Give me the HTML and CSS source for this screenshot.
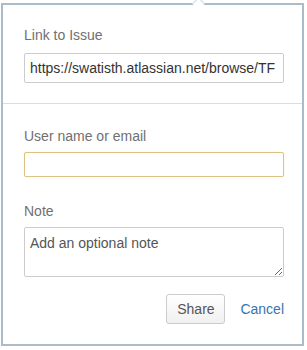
FILE: index.html
```html
<!DOCTYPE html>
<html lang="en">
<head>
    <meta charset="UTF-8">
    <meta name="viewport" content="width=device-width, initial-scale=1.0">
    <title>Share Issue</title>
    <link rel="stylesheet" href="styles.css">
</head>
<body>
    <div class="dialog">
        <span class="tip"></span>
        <div class="section top">
            <label for="link">Link to Issue</label>
            <input type="text" id="link" class="field" value="https://swatisth.atlassian.net/browse/TF" readonly>
        </div>
        <div class="section share">
            <label for="user">User name or email</label>
            <input type="text" id="user" class="field user">

            <label for="note" class="note-label">Note</label>
            <textarea id="note" class="field note" placeholder="Add an optional note"></textarea>

            <div class="actions">
                <button type="button" class="btn">Share</button>
                <a href="#" class="cancel">Cancel</a>
            </div>
        </div>
    </div>
</body>
</html>
```

FILE: styles.css
```css
body {
    margin: 0;
    background-color: #fff;
    font-family: "Liberation Sans", Arial, sans-serif;
    font-size: 14px;
    color: #333;
}
.dialog {
    position: relative;
    box-sizing: border-box;
    width: 303px;
    height: 343px;
    margin: 3px 0 0 1px;
    border: 2px solid #abbbc7;
    background-color: #fff;
}
/* little arrow on top edge */
.tip {
    position: absolute;
    top: -6px;
    left: 191px;
    width: 8px;
    height: 8px;
    background-color: #fff;
    border-top: 1px solid #cfd9e0;
    border-left: 1px solid #cfd9e0;
    transform: rotate(45deg);
}
.section {
    display: flex;
    flex-direction: column;
    padding: 20px 18px 20px 21px;
}
.top {
    border-bottom: 1px solid #dcdcdc;
}
.share {
    padding-top: 22px;
}
label {
    line-height: 20px;
    color: #707070;
    margin-bottom: 8px;
}
.share label {
    margin-bottom: 6px;
}
.share .note-label {
    margin-top: 24px;
}
.field {
    box-sizing: border-box;
    width: 100%;
    height: 30px;
    margin: 0;
    padding: 0 5px;
    border: 1px solid #cccccc;
    border-radius: 2px;
    font-family: inherit;
    font-size: 14px;
    color: #333;
    background-color: #fff;
    outline: none;
}
.user {
    height: 25px;
    border-color: #dcc385;
    box-shadow: 0 0 1px #efdca6;
}
.note {
    height: 50px;
    padding: 7px 5px;
    line-height: 16px;
    resize: vertical;
}
.note::placeholder {
    color: #555;
}
.actions {
    display: flex;
    justify-content: flex-end;
    align-items: center;
    gap: 15px;
    margin-top: 17px;
}
.btn {
    box-sizing: border-box;
    width: 59px;
    height: 30px;
    padding: 0;
    border: 1px solid #cccccc;
    border-radius: 3px;
    background: linear-gradient(#ffffff, #f0f0f0);
    font-family: inherit;
    font-size: 14px;
    color: #555;
    cursor: pointer;
}
.cancel {
    color: #3b73af;
    text-decoration: none;
}
```
